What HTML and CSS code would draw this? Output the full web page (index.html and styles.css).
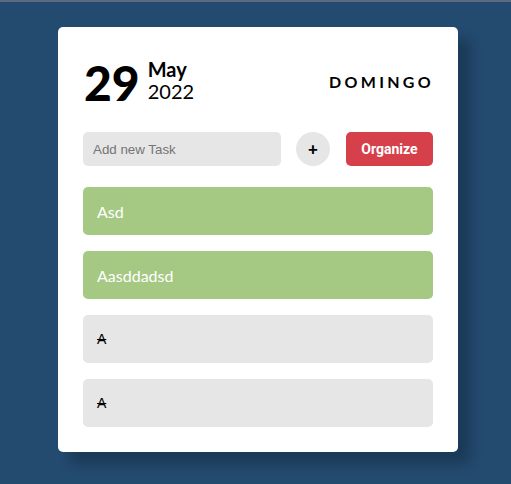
FILE: index.html
```html
<!DOCTYPE html>
<html>
<head>
<meta charset="utf-8">
<link rel="stylesheet" href="styles.css">
</head>
<body>
<div class="topline"></div>
<div class="page">
  <div class="card">
    <div class="header">
      <div class="date">
        <span class="day">29</span>
        <div class="monthyear">
          <span class="month">May</span>
          <span class="year">2022</span>
        </div>
      </div>
      <div class="weekday">DOMINGO</div>
    </div>
    <div class="controls">
      <input class="newtask" type="text" placeholder="Add new Task">
      <button class="add">+</button>
      <button class="organize">Organize</button>
    </div>
    <div class="tasks">
      <div class="task pending">Asd</div>
      <div class="task pending">Aasddadsd</div>
      <div class="task done">A</div>
      <div class="task done">A</div>
    </div>
  </div>
</div>
</body>
</html>
```
FILE: styles.css
```css
html, body {
  margin: 0;
  padding: 0;
  background: #234a6f;
  height: 100%;
  overflow: hidden;
}
.topline {
  height: 2px;
  background: #5c6b82;
}
.page {
  padding: 25px 0 0 58px;
}
.card {
  width: 350px;
  padding: 32px 25px 25px;
  background: #fff;
  border-radius: 5px;
  box-shadow: 12px 12px 12px rgba(0, 0, 0, 0.22);
  font-family: Lato, "Liberation Sans", sans-serif;
}
.header {
  display: flex;
  justify-content: space-between;
  align-items: center;
  height: 48px;
}
.date {
  display: flex;
  align-items: center;
}
.day {
  font-size: 48px;
  font-weight: 900;
  line-height: 48px;
  color: #000;
  margin-left: 1px;
}
.monthyear {
  display: flex;
  flex-direction: column;
  margin-left: 8px;
  margin-top: -6px;
  font-size: 20px;
  line-height: 22px;
  color: #000;
}
.month {
  font-weight: 700;
}
.year {
  font-weight: 400;
}
.weekday {
  font-size: 16px;
  font-weight: 700;
  letter-spacing: 3.3px;
  margin-right: -1px;
  margin-top: -4px;
  color: #000;
}
.controls {
  display: flex;
  align-items: center;
  margin-top: 25px;
  height: 34px;
}
.newtask {
  flex: 1;
  min-width: 0;
  height: 34px;
  box-sizing: border-box;
  border: none;
  border-radius: 5px;
  background: #e6e6e6;
  padding: 0 10px;
  font-family: "Liberation Sans", Arial, sans-serif;
  font-size: 13.33px;
  color: #333;
  outline: none;
}
.newtask::placeholder {
  color: #757575;
}
.add {
  width: 34px;
  height: 34px;
  margin-left: 15px;
  border: none;
  border-radius: 50%;
  background: #e6e6e6;
  font-family: Lato, sans-serif;
  font-size: 17px;
  font-weight: 900;
  color: #000;
  padding: 0;
  line-height: 34px;
}
.organize {
  width: 87px;
  height: 34px;
  margin-left: 16px;
  border: none;
  border-radius: 5px;
  background: #d5404a;
  color: #fff;
  font-family: Roboto, "Liberation Sans", Arial, sans-serif;
  font-size: 14px;
  font-weight: 700;
  padding: 0;
}
.tasks {
  display: flex;
  flex-direction: column;
  gap: 16px;
  margin-top: 21px;
}
.task {
  height: 48px;
  box-sizing: border-box;
  border-radius: 5px;
  padding: 0 14px;
  display: flex;
  align-items: center;
}
.pending {
  background: #a5c883;
  color: #fff;
  font-size: 16px;
}
.done {
  background: #e6e6e6;
  color: #000;
  font-family: "Liberation Sans", Arial, sans-serif;
  font-size: 14px;
  text-decoration: line-through;
}
```
